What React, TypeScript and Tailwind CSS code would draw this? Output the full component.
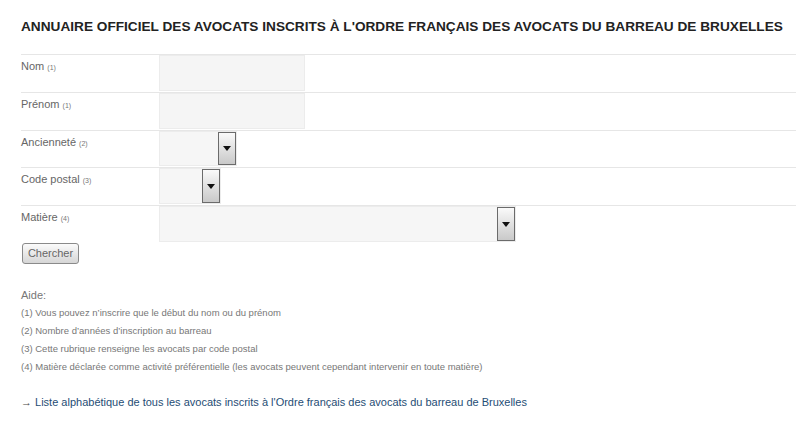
import React from 'react';

const fields: { label: string; note: string; kind: 'input' | 'select'; width: number; height: number }[] = [
  { label: 'Nom', note: '(1)', kind: 'input', width: 146, height: 36 },
  { label: 'Prénom', note: '(1)', kind: 'input', width: 146, height: 36 },
  { label: 'Ancienneté', note: '(2)', kind: 'select', width: 78, height: 35 },
  { label: 'Code postal', note: '(3)', kind: 'select', width: 62, height: 36 },
  { label: 'Matière', note: '(4)', kind: 'select', width: 357, height: 36 },
];

const helpLines = [
  '(1) Vous pouvez n’inscrire que le début du nom ou du prénom',
  '(2) Nombre d’années d’inscription au barreau',
  '(3) Cette rubrique renseigne les avocats par code postal',
  '(4) Matière déclarée comme activité préférentielle (les avocats peuvent cependant intervenir en toute matière)',
];

const FakeSelect = ({ width, height }: { width: number; height: number }) => (
  <div className="flex bg-[#f6f6f6] border border-[#ececec]" style={{ width, height }}>
    <div className="flex-1" />
    <div className="w-[18px] h-full border border-[#6b6b6b] bg-gradient-to-b from-[#fafafa] to-[#c9c9c9] flex items-center justify-center">
      <svg width="8" height="5" viewBox="0 0 8 5">
        <path d="M0 0h8L4 5z" fill="#111" />
      </svg>
    </div>
  </div>
);

const App = () => {
  return (
    <div className="min-h-screen bg-white pl-[21px] pt-[19px] font-['Liberation_Sans',Arial,sans-serif]">
      <h1 className="text-[13.65px] font-bold text-[#222] leading-[16px]">
        ANNUAIRE OFFICIEL DES AVOCATS INSCRITS À L'ORDRE FRANÇAIS DES AVOCATS DU BARREAU DE BRUXELLES
      </h1>

      <form className="mt-[19px]">
        {fields.map((f) => (
          <div key={f.label} className="flex border-t border-[#e6e6e6] pb-[1px]">
            <label className="w-[138px] pt-[4px] text-[11px] leading-[14px] text-[#666]">
              {f.label} <span className="text-[7px] text-[#777]">{f.note}</span>
            </label>
            {f.kind === 'input' ? (
              <div className="bg-[#f5f5f5] border border-[#ececec]" style={{ width: f.width, height: f.height }} />
            ) : (
              <FakeSelect width={f.width} height={f.height} />
            )}
          </div>
        ))}
        <button
          type="button"
          className="block ml-[1px] h-[21px] w-[57px] rounded-[3px] border border-[#8a8a8a] bg-gradient-to-b from-[#fbfbfb] to-[#d6d6d6] text-[11px] text-[#666] leading-none"
        >
          Chercher
        </button>
      </form>

      <div className="mt-[24px] text-[11px] leading-[14px] text-[#777]">Aide:</div>
      <ul className="mt-[2px] text-[9.5px] text-[#777] leading-[18px]">
        {helpLines.map((line) => (
          <li key={line}>{line}</li>
        ))}
      </ul>

      <a href="#" className="block mt-[19px] text-[11px] leading-[14px] text-[#1f4d75]">
        <span className="text-[#444]">→</span> Liste alphabétique de tous les avocats inscrits à l'Ordre français des avocats du barreau de Bruxelles
      </a>
    </div>
  );
};

export default App;
